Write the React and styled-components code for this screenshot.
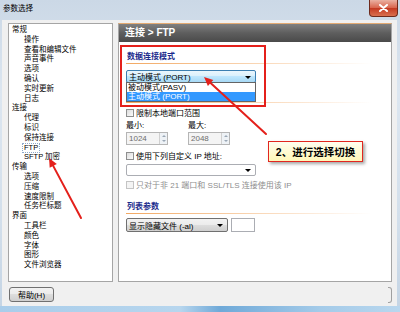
import React from 'react';
import styled, { createGlobalStyle } from 'styled-components';

const FONT = `"Liberation Sans", "Noto Sans CJK SC", sans-serif`;

const GlobalStyle = createGlobalStyle`
  html, body {
    margin: 0;
    padding: 0;
    background: #fff;
  }
  body {
    font-family: ${FONT};
  }
`;

const Window = styled.div`
  position: relative;
  width: 400px;
  height: 312px;
  overflow: hidden;
  display: flex;
  flex-direction: column;
  font-family: ${FONT};
  color: #000;
  background: linear-gradient(180deg, #cbd8e6 0%, #dce6f0 30%, #d3dfeb 70%, #c4d4e4 100%);
`;

const TitleBar = styled.div`
  height: 20px;
  flex: none;
  display: flex;
  align-items: flex-start;
  justify-content: space-between;
  padding: 0 2px 0 3px;
`;

const Title = styled.div`
  font-size: 7.5px;
  line-height: 9px;
  margin-top: 4px;
`;

const CloseButton = styled.div`
  width: 29px;
  height: 17px;
  box-sizing: border-box;
  border: 1px solid #6e2a1c;
  border-top: none;
  border-radius: 0 0 4px 4px;
  background: linear-gradient(180deg, #eab1a2 0%, #d9664e 48%, #c43a22 52%, #d9704f 100%);
  display: flex;
  align-items: center;
  justify-content: center;
`;

const Client = styled.div`
  flex: none;
  height: 286px;
  margin: 0 3px 0 2px;
  padding: 3px 5px 0 6px;
  box-sizing: border-box;
  background: #f0f0f0;
  display: flex;
  flex-direction: column;
`;

const Panels = styled.div`
  height: 259px;
  display: flex;
  gap: 5px;
`;

const Tree = styled.div`
  width: 105px;
  flex: none;
  box-sizing: border-box;
  background: #fff;
  border: 1px solid #a5a5a5;
  padding: 1px 0 0 3px;
`;

const TreeItem = styled.div`
  font-size: 7.5px;
  line-height: 9.8px;
  height: 9.8px;
  white-space: nowrap;
  padding-left: ${p => (p.$child ? 12 : 0)}px;
`;

const Focused = styled.span`
  display: inline-block;
  margin-left: -2px;
  padding: 0 1px;
  line-height: 8px;
  border: 1px dotted #8ea9c9;
`;

const Settings = styled.div`
  flex: 1;
  box-sizing: border-box;
  background: #fff;
  border: 1px solid #a5a5a5;
  border-top-color: #e3aa72;
  display: flex;
  flex-direction: column;
`;

const Header = styled.div`
  height: 18px;
  flex: none;
  padding-left: 6px;
  background: linear-gradient(180deg, #808080 0%, #5e5e5e 50%, #4a4a4a 100%);
  color: #fff;
  font-size: 10px;
  font-weight: bold;
  line-height: 18px;
`;

const Content = styled.div`
  position: relative;
  padding: 9px 0 0 7px;
  display: flex;
  flex-direction: column;
`;

const SectionTitle = styled.div`
  margin-top: ${p => p.$mt || 0}px;
  padding-left: 1px;
  font-size: 8px;
  font-weight: bold;
  line-height: 12px;
  height: 12px;
  color: #1a2a8c;
`;

const Rule = styled.div`
  width: 246px;
  height: 1px;
  background: linear-gradient(90deg, #f2a862 0%, #f8cfa8 45%, #fdeee0 80%, rgba(255, 255, 255, 0) 100%);
`;

const comboBg = {
  focus: 'linear-gradient(180deg, #eaf6fd 0%, #d9f0fc 50%, #bee6fd 50%, #a7d9f5 100%)',
  plain: '#fff',
  button: 'linear-gradient(180deg, #f2f2f2 0%, #ebebeb 50%, #dddddd 50%, #cfcfcf 100%)',
};

const comboBorder = {
  focus: '#3c7fb1',
  plain: '#abadb3',
  button: '#707070',
};

const Combo = styled.div`
  position: relative;
  margin-top: ${p => p.$mt || 0}px;
  width: ${p => p.$w}px;
  height: ${p => p.$h}px;
  box-sizing: border-box;
  padding-left: 2px;
  border: 1px solid ${p => comboBorder[p.$variant]};
  border-radius: 2px;
  background: ${p => comboBg[p.$variant]};
  display: flex;
  align-items: center;
  font-size: 8px;
  white-space: nowrap;
  &::after {
    content: '';
    position: absolute;
    right: 4px;
    top: 50%;
    margin-top: -1px;
    border-left: 3px solid transparent;
    border-right: 3px solid transparent;
    border-top: 3px solid #000;
  }
`;

const Popup = styled.div`
  position: absolute;
  left: -1px;
  top: 100%;
  width: 130px;
  box-sizing: border-box;
  border: 1px solid #646464;
  background: #fff;
  z-index: 2;
`;

const PopupItem = styled.div`
  height: 9px;
  line-height: 9px;
  padding-left: 1px;
  font-size: 8px;
  background: ${p => (p.$selected ? '#3399ff' : '#fff')};
  color: ${p => (p.$selected ? '#fff' : '#000')};
`;

const CheckRow = styled.div`
  margin-top: ${p => p.$mt || 0}px;
  height: 11px;
  display: flex;
  align-items: center;
  gap: 2px;
  font-size: 8px;
  white-space: nowrap;
  color: ${p => (p.$disabled ? '#8d8d8d' : '#000')};
`;

const Box = styled.span`
  width: 8px;
  height: 8px;
  box-sizing: border-box;
  border: 1px solid ${p => (p.$disabled ? '#c4c4c4' : '#8e8f8f')};
  background: ${p => (p.$disabled ? '#f4f4f4' : 'linear-gradient(135deg, #dcdcdc, #fbfbfb)')};
`;

const Pair = styled.div`
  margin-top: ${p => p.$mt || 0}px;
  display: grid;
  grid-template-columns: 62px 62px;
  font-size: 8px;
  line-height: 10px;
`;

const Spinner = styled.div`
  width: ${p => p.$w}px;
  height: 13px;
  box-sizing: border-box;
  border: 1px solid #b5b5b5;
  background: #f4f4f4;
  color: #6d6d6d;
  font-size: 8px;
  display: flex;
  align-items: center;
  justify-content: space-between;
  padding-left: 2px;
`;

const SpinButtons = styled.div`
  width: 7px;
  height: 11px;
  display: flex;
  flex-direction: column;
  border-left: 1px solid #d0d0d0;
`;

const SpinHalf = styled.div`
  flex: 1;
  display: flex;
  align-items: center;
  justify-content: center;
  background: #eef2f6;
  &::before {
    content: '';
    border-left: 2px solid transparent;
    border-right: 2px solid transparent;
    ${p => (p.$up ? 'border-bottom: 2px solid #9aa7b5;' : 'border-top: 2px solid #9aa7b5;')}
  }
`;

const InputRow = styled.div`
  margin-top: ${p => p.$mt || 0}px;
  display: flex;
  gap: 3px;
`;

const TextBox = styled.div`
  width: 24px;
  height: 14px;
  box-sizing: border-box;
  border: 1px solid #abadb3;
  background: #fff;
`;

const Footer = styled.div`
  margin-top: 5px;
  display: flex;
  justify-content: space-between;
  align-items: flex-start;
`;

const Button = styled.div`
  margin-left: 1px;
  width: 45px;
  height: 15px;
  box-sizing: border-box;
  border: 1px solid #707070;
  border-radius: 3px;
  background: linear-gradient(180deg, #f2f2f2 0%, #ebebeb 50%, #dddddd 50%, #cfcfcf 100%);
  font-size: 8px;
  display: flex;
  align-items: center;
  justify-content: center;
`;

const PartialButton = styled.div`
  width: 4px;
  height: 16px;
  box-sizing: border-box;
  border: 1px solid #a0a0a0;
  border-left: none;
  border-radius: 0 3px 3px 0;
`;

const BottomStrip = styled.div`
  flex: 1;
  background: linear-gradient(90deg, #a9cdea 0%, #b7d6ee 45%, #6fa9d8 55%, #a4cbe9 80%, #b9d7ee 100%);
`;

const RedBox = styled.div`
  position: absolute;
  left: 120px;
  top: 45px;
  width: 146px;
  height: 62px;
  box-sizing: border-box;
  border: 2px solid #e4201b;
  pointer-events: none;
  z-index: 3;
`;

const Arrows = styled.svg`
  position: absolute;
  left: 0;
  top: 0;
  pointer-events: none;
  z-index: 4;
`;

const Callout = styled.div`
  position: absolute;
  left: 268px;
  top: 141px;
  width: 95px;
  height: 21px;
  box-sizing: border-box;
  border: 1px solid #e2261f;
  background: linear-gradient(180deg, #fffef0 0%, #fff7b8 100%);
  box-shadow: 2px 2px 3px rgba(0, 0, 0, 0.35);
  font-size: 10.5px;
  font-weight: bold;
  display: flex;
  align-items: center;
  justify-content: center;
  white-space: nowrap;
  z-index: 5;
`;

const tree = [
  ['常规'], ['操作', 1], ['查看和编辑文件', 1], ['声音事件', 1], ['选项', 1], ['确认', 1], ['实时更新', 1], ['日志', 1],
  ['连接'], ['代理', 1], ['标识', 1], ['保持连接', 1], ['FTP', 1, true], ['SFTP 加密', 1],
  ['传输'], ['选项', 1], ['压缩', 1], ['速度限制', 1], ['任务栏标题', 1],
  ['界面'], ['工具栏', 1], ['颜色', 1], ['字体', 1], ['图形', 1], ['文件浏览器', 1],
];

export default function App() {
  return (
    <>
      <GlobalStyle />
      <Window>
        <TitleBar>
          <Title>参数选择</Title>
          <CloseButton>
            <svg width="9" height="8" viewBox="0 0 9 8">
              <path d="M1 1 L8 7 M8 1 L1 7" stroke="#fff" strokeWidth="2" strokeLinecap="round" />
            </svg>
          </CloseButton>
        </TitleBar>
        <Client>
          <Panels>
            <Tree>
              {tree.map(([label, child, focused], i) => (
                <TreeItem key={i} $child={!!child}>
                  {focused ? <Focused>{label}</Focused> : label}
                </TreeItem>
              ))}
            </Tree>
            <Settings>
              <Header>连接 &gt; FTP</Header>
              <Content>
                <SectionTitle>数据连接模式</SectionTitle>
                <Rule />
                <Combo $mt={6} $w={130} $h={13} $variant="focus">
                  主动模式 (PORT)
                  <Popup>
                    <PopupItem>被动模式(PASV)</PopupItem>
                    <PopupItem $selected>主动模式 (PORT)</PopupItem>
                  </Popup>
                </Combo>
                {/* section title here is hidden under the open list */}
                <SectionTitle $mt={7} />
                <Rule />
                <CheckRow $mt={4}>
                  <Box />
                  限制本地端口范围
                </CheckRow>
                <Pair $mt={3}>
                  <span>最小:</span>
                  <span>最大:</span>
                </Pair>
                <Pair $mt={1}>
                  <Spinner $w={42}>
                    1024
                    <SpinButtons><SpinHalf $up /><SpinHalf /></SpinButtons>
                  </Spinner>
                  <Spinner $w={42}>
                    2048
                    <SpinButtons><SpinHalf $up /><SpinHalf /></SpinButtons>
                  </Spinner>
                </Pair>
                <CheckRow $mt={5}>
                  <Box />
                  使用下列自定义 IP 地址:
                </CheckRow>
                <Combo $mt={3} $w={130} $h={12} $variant="plain" />
                <CheckRow $mt={3} $disabled>
                  <Box $disabled />
                  只对于非 21 端口和 SSL/TLS 连接使用该 IP
                </CheckRow>
                <SectionTitle $mt={11}>列表参数</SectionTitle>
                <Rule />
                <InputRow $mt={4}>
                  <Combo $w={102} $h={14} $variant="button">显示隐藏文件 (-al)</Combo>
                  <TextBox />
                </InputRow>
              </Content>
            </Settings>
          </Panels>
          <Footer>
            <Button>帮助(H)</Button>
            <PartialButton />
          </Footer>
        </Client>
        <BottomStrip />

        <RedBox />
        <Arrows width="400" height="312" viewBox="0 0 400 312">
          <g stroke="#e4201b" strokeWidth="2" strokeLinecap="round" fill="none">
            <line x1="266" y1="134" x2="210.6" y2="83.1" />
            <line x1="81" y1="218" x2="53.2" y2="165.9" />
          </g>
          <g fill="#e4201b">
            <polygon points="204,77 213.3,80.1 207.9,86" />
            <polygon points="49,158 56.8,164.1 49.7,167.8" />
          </g>
        </Arrows>
        <Callout>2、进行选择切换</Callout>
      </Window>
    </>
  );
}
